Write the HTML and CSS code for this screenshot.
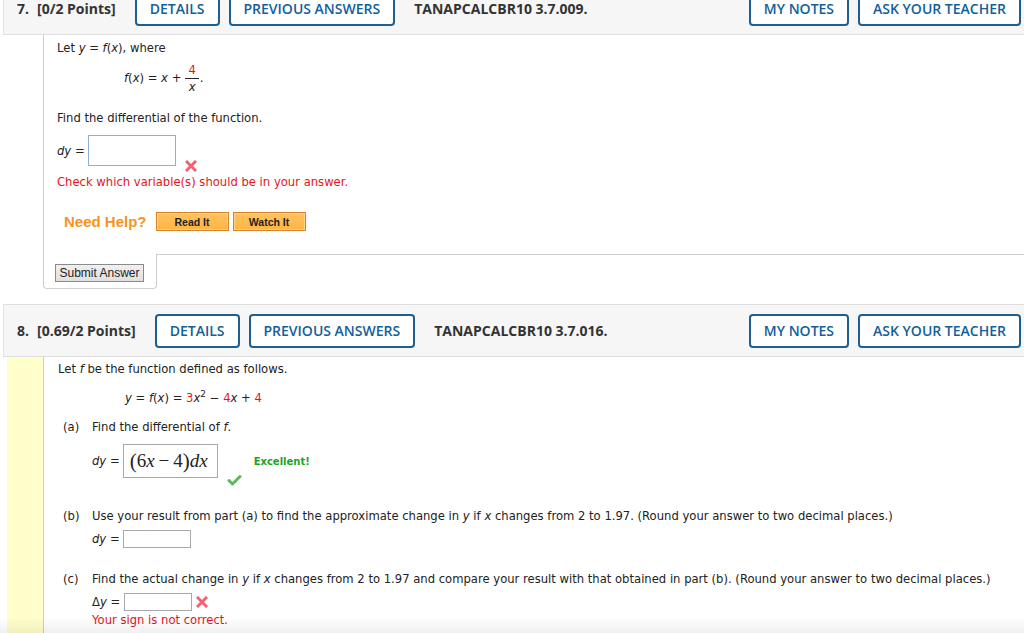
FILE: index.html
```html
<!DOCTYPE html>
<html>
<head>
    <title>WebAssign Questions</title>
    <link rel="stylesheet" href="styles.css">
</head>
<body>

    <!-- Question 7 -->
    <div class="question first">
        <div class="q-header">
            <span class="q-num">7.</span>
            <span class="q-points">[0/2 Points]</span>
            <button class="q-btn">Details</button>
            <button class="q-btn">Previous Answers</button>
            <span class="q-code">TANAPCALCBR10 3.7.009.</span>
            <span class="q-spacer"></span>
            <button class="q-btn">My Notes</button>
            <button class="q-btn">Ask Your Teacher</button>
        </div>

        <div class="q7-body">
            <div class="q7-content">
                <p>Let <i>y</i> = <i>f</i>(<i>x</i>), where</p>
                <div class="formula">
                    <span><i>f</i>(<i>x</i>) = <i>x</i> + </span>
                    <span class="frac">
                        <span class="num red">4</span>
                        <span class="den"><i>x</i></span>
                    </span>
                    <span>.</span>
                </div>
                <p class="gap">Find the differential of the function.</p>
                <div class="answer-row q7-row">
                    <span class="lbl"><i>dy</i> =</span>
                    <span class="input big-input"></span>
                    <svg class="cross low" width="12" height="12" viewBox="0 0 12 12"><path d="M2 2 L10 10 M10 2 L2 10" stroke="#ef6470" stroke-width="3" stroke-linecap="square"/></svg>
                </div>
                <p class="error q7-err">Check which variable(s) should be in your answer.</p>
                <div class="help">
                    <span class="help-title">Need Help?</span>
                    <button class="help-btn">Read It</button>
                    <button class="help-btn">Watch It</button>
                </div>
            </div>
            <div class="q7-foot">
                <div class="submit-tab">
                    <button class="submit-btn">Submit Answer</button>
                </div>
                <div class="tab-filler"></div>
            </div>
        </div>
    </div>

    <!-- Question 8 -->
    <div class="question second">
        <div class="q-header">
            <span class="q-num">8.</span>
            <span class="q-points">[0.69/2 Points]</span>
            <button class="q-btn">Details</button>
            <button class="q-btn">Previous Answers</button>
            <span class="q-code">TANAPCALCBR10 3.7.016.</span>
            <span class="q-spacer"></span>
            <button class="q-btn">My Notes</button>
            <button class="q-btn">Ask Your Teacher</button>
        </div>

        <div class="q8-body">
            <div class="gutter"></div>
            <div class="q8-content">
                <p>Let <i>f</i> be the function defined as follows.</p>
                <p class="formula2"><i>y</i> = <i>f</i>(<i>x</i>) = <span class="red">3</span><i>x</i><sup>2</sup> &minus; <span class="red">4</span><i>x</i> + <span class="red">4</span></p>
                <div class="part pa">
                    <span class="part-lbl">(a)</span>
                    <span>Find the differential of <i>f</i>.</span>
                </div>
                <div class="answer-row sub a-row">
                    <span class="lbl"><i>dy</i> =</span>
                    <span class="math-box"><span class="paren">(</span>6<i>x</i><span class="op">&minus;</span>4<span class="paren">)</span><i>dx</i></span>
                    <svg class="check" width="15" height="12" viewBox="0 0 15 12"><path d="M2 6.5 L5.5 10 L13 2.5" fill="none" stroke="#5cb85c" stroke-width="3" stroke-linecap="round" stroke-linejoin="round"/></svg>
                    <span class="excellent">Excellent!</span>
                </div>
                <div class="part pb">
                    <span class="part-lbl">(b)</span>
                    <span>Use your result from part (a) to find the approximate change in <i>y</i> if <i>x</i> changes from 2 to 1.97. (Round your answer to two decimal places.)</span>
                </div>
                <div class="answer-row sub small-row">
                    <span class="lbl"><i>dy</i> =</span>
                    <span class="input small-input"></span>
                </div>
                <div class="part pc">
                    <span class="part-lbl">(c)</span>
                    <span>Find the actual change in <i>y</i> if <i>x</i> changes from 2 to 1.97 and compare your result with that obtained in part (b). (Round your answer to two decimal places.)</span>
                </div>
                <div class="answer-row sub small-row">
                    <span class="lbl">&Delta;<i>y</i> =</span>
                    <span class="input small-input delta-input"></span>
                    <svg class="cross" width="12" height="12" viewBox="0 0 12 12"><path d="M2 2 L10 10 M10 2 L2 10" stroke="#ef6470" stroke-width="3" stroke-linecap="square"/></svg>
                </div>
                <p class="error sub">Your sign is not correct.</p>
            </div>
        </div>
    </div>

    <div class="bottom-fade"></div>

</body>
</html>
```

FILE: styles.css
```css
body {
    margin: 0;
    padding: 0;
    background-color: #fff;
    font-family: "DejaVu Sans", Verdana, sans-serif;
    font-size: 11.6px;
    color: #222;
    overflow: hidden;
}
p {
    margin: 0;
    line-height: 18px;
}
.red {
    color: #f01010;
}

/* header bar */
.question.first {
    margin-top: -18px;
}
.question.second {
    margin-top: 15px;
}
.q-header {
    display: flex;
    align-items: center;
    height: 51px;
    margin-left: 3px;
    padding-left: 13px;
    background-color: #f6f6f6;
    border-top: 1px solid #dedede;
    border-bottom: 1px solid #dedede;
    border-left: 1px solid #e6e6e6;
    font-family: "Open Sans", sans-serif;
    color: #333;
}
.q-num,
.q-points,
.q-code {
    font-weight: 700;
    font-size: 14px;
}
.q-num {
    margin-right: 8px;
}
.q-points {
    margin-right: 19px;
}
.q-code {
    margin-left: 10px;
}
.q-spacer {
    flex: 1;
}
.q-btn {
    height: 34px;
    padding: 0 13px;
    margin-right: 9px;
    background-color: #fff;
    border: 2px solid #1d5e93;
    border-radius: 4px;
    color: #12609b;
    font-family: "Open Sans", sans-serif;
    font-weight: 600;
    font-size: 14px;
    text-transform: uppercase;
}
.q-btn:last-child {
    margin-right: 3px;
}

/* question 7 */
.q7-body {
    margin-left: 43px;
}
.q7-content {
    border-left: 1px solid #cfcfcf;
    padding: 4px 0 23px 13px;
}
.formula {
    display: flex;
    align-items: center;
    margin: 2px 0 0 67px;
    height: 38px;
}
.frac {
    display: inline-flex;
    flex-direction: column;
    align-items: center;
    margin: 0 1px 0 4px;
    line-height: 16px;
}
.frac .num {
    border-bottom: 1px solid #222;
    padding: 0 3px;
}
.gap {
    margin-top: 12px;
}
.answer-row {
    display: flex;
    align-items: center;
}
.lbl {
    margin-right: 3px;
}
.input {
    display: inline-block;
    background-color: #fff;
}
.q7-row {
    margin-top: 8px;
    align-items: flex-end;
}
.q7-row .lbl {
    align-self: center;
}
.big-input {
    width: 86px;
    height: 29px;
    border: 1px solid #8eaed3;
}
.cross {
    margin-left: 8px;
}
.cross.low {
    margin-left: 9px;
    margin-bottom: -6px;
}
.error {
    color: #e4141b;
}
.q7-err {
    margin-top: 7px;
}
.help {
    display: flex;
    align-items: center;
    margin: 21px 0 0 7px;
}
.help-title {
    font-family: "Liberation Sans", Arial, sans-serif;
    font-weight: 700;
    font-size: 15px;
    color: #f7941d;
    margin-right: 9px;
}
.help-btn {
    width: 73px;
    height: 19px;
    margin-right: 4px;
    padding: 0;
    background: linear-gradient(#ffc35f, #ffb443);
    border: 1px solid #d4862e;
    box-shadow: inset 0 0 0 1px #ffd08a;
    font-family: "Liberation Sans", Arial, sans-serif;
    font-weight: 700;
    font-size: 10.5px;
    color: #222;
}
.q7-foot {
    display: flex;
}
.submit-tab {
    width: 89px;
    padding: 10px 12px 6px 11px;
    border-left: 1px solid #cfcfcf;
    border-right: 1px solid #cfcfcf;
    border-bottom: 1px solid #cfcfcf;
    border-radius: 0 0 4px 4px;
}
.submit-btn {
    display: block;
    width: 89px;
    height: 18px;
    padding: 0;
    background: linear-gradient(#f0f0f0, #e0e0e0);
    border: 1px solid #8a8a8a;
    font-family: "Liberation Sans", Arial, sans-serif;
    font-size: 12px;
    color: #222;
}
.tab-filler {
    flex: 1;
    border-top: 1px solid #cfcfcf;
}

/* question 8 */
.q8-body {
    display: flex;
    margin-left: 7px;
    min-height: 290px;
}
.gutter {
    width: 36px;
    background-color: #ffffcc;
    border-right: 1px solid #cfcfcf;
}
.q8-content {
    flex: 1;
    padding: 3px 0 0 14px;
}
.formula2 {
    margin: 11px 0 0 67px;
}
.formula2 sup {
    font-size: 9px;
    line-height: 0;
    vertical-align: 5px;
}
.part {
    display: flex;
    line-height: 18px;
    margin-left: 5px;
}
.part-lbl {
    width: 29px;
    flex-shrink: 0;
}
.pa {
    margin-top: 11px;
}
.pb {
    margin-top: 29px;
}
.pc {
    margin-top: 22px;
}
.sub {
    margin-left: 34px;
}
.a-row {
    margin-top: 8px;
    align-items: center;
}
.math-box {
    display: inline-flex;
    align-items: center;
    width: 87px;
    height: 32px;
    padding-left: 6px;
    border: 1px solid #a9a9a9;
    font-family: "Liberation Serif", "Times New Roman", serif;
    font-size: 19px;
    color: #222;
}
.math-box .paren {
    font-size: 21px;
}
.math-box .op {
    margin: 0 4px;
}
.check {
    align-self: flex-end;
    margin: 0 0 -8px 9px;
}
.excellent {
    margin-left: 12px;
    font-weight: 700;
    font-size: 10px;
    color: #1fa31f;
}
.small-row {
    margin-top: 5px;
}
.small-input {
    width: 66px;
    height: 16px;
    border: 1px solid #a9a9a9;
}
.delta-input {
    margin-left: 1px;
}
.small-row .cross {
    margin-left: 4px;
}

.bottom-fade {
    position: fixed;
    left: 0;
    right: 0;
    bottom: 0;
    height: 16px;
    background: linear-gradient(rgba(0, 0, 0, 0), rgba(0, 0, 0, 0.06));
}
```
